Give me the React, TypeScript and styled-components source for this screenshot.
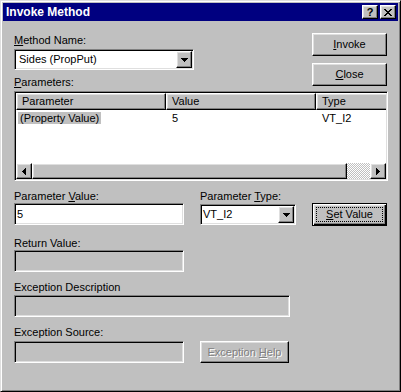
import React from "react";
import styled, { createGlobalStyle, css } from "styled-components";

const GlobalStyle = createGlobalStyle`
  *, *::before, *::after { box-sizing: border-box; }
  html, body { margin: 0; padding: 0; background: #c0c0c0; }
  body {
    font-family: "Liberation Sans", Arial, sans-serif;
    font-size: 11px;
    color: #000;
  }
`;

const raised = css`
  background: #c0c0c0;
  border: 1px solid;
  border-color: #fff #000 #000 #fff;
  box-shadow: inset -1px -1px #808080, inset 1px 1px #dfdfdf;
`;

const sunken = css`
  border: 1px solid;
  border-color: #808080 #fff #fff #808080;
  box-shadow: inset 1px 1px #000, inset -1px -1px #dfdfdf;
`;

const Window = styled.div`
  width: 401px;
  height: 392px;
  display: flex;
  flex-direction: column;
  background: #c0c0c0;
  border: 1px solid;
  border-color: #dfdfdf #000 #000 #dfdfdf;
  box-shadow: inset 1px 1px #fff, inset -1px -1px #808080;
  padding: 2px;
`;

const TitleBar = styled.div`
  height: 18px;
  flex-shrink: 0;
  display: flex;
  align-items: center;
  background: #000080;
  color: #fff;
  padding: 0 2px 0 3px;
`;

const Title = styled.span`
  font-weight: bold;
  font-size: 12px;
  line-height: 18px;
`;

const TitleButtons = styled.div`
  margin-left: auto;
  display: flex;
  gap: 2px;
`;

const TitleButton = styled.div`
  ${raised};
  width: 16px;
  height: 14px;
  display: flex;
  align-items: center;
  justify-content: center;
  color: #000;
  font-weight: bold;
  font-size: 11px;
  line-height: 12px;
`;

const Client = styled.div`
  flex: 1;
  display: flex;
  flex-direction: column;
  padding: 12px 10px 0 11px;
`;

const TopRow = styled.div`
  display: flex;
  justify-content: space-between;
  align-items: flex-start;
`;

const LeftColumn = styled.div`
  width: 180px;
  display: flex;
  flex-direction: column;
`;

const ButtonColumn = styled.div`
  display: flex;
  flex-direction: column;
  gap: 7px;
  margin-right: 1px;
`;

const Caption = styled.div<{ $mt?: number; $area?: string }>`
  line-height: 13px;
  white-space: nowrap;
  margin-top: ${(p) => p.$mt ?? 0}px;
  grid-area: ${(p) => p.$area ?? "auto"};
`;

const Key = styled.span`
  text-decoration: underline;
  text-underline-offset: 1px;
`;

const Combo = styled.div<{ $w?: number; $pl: number; $mt?: number; $area?: string }>`
  ${sunken};
  background: #fff;
  width: ${(p) => (p.$w ? `${p.$w}px` : "100%")};
  height: 21px;
  padding: 1px;
  display: flex;
  align-items: center;
  margin-top: ${(p) => p.$mt ?? 0}px;
  grid-area: ${(p) => p.$area ?? "auto"};
`;

const ComboText = styled.span<{ $pl: number }>`
  flex: 1;
  padding-left: ${(p) => p.$pl}px;
  line-height: 17px;
  white-space: nowrap;
`;

const ArrowButton = styled.div`
  ${raised};
  width: 16px;
  height: 17px;
  flex-shrink: 0;
  display: flex;
  align-items: center;
  justify-content: center;
`;

const Button = styled.div<{ $w?: number; $h?: number; $mt?: number; $area?: string; $disabled?: boolean }>`
  ${raised};
  width: ${(p) => p.$w ?? 75}px;
  height: ${(p) => p.$h ?? 23}px;
  display: flex;
  align-items: center;
  justify-content: center;
  line-height: 13px;
  white-space: nowrap;
  margin-top: ${(p) => p.$mt ?? 0}px;
  grid-area: ${(p) => p.$area ?? "auto"};
  color: ${(p) => (p.$disabled ? "#808080" : "#000")};
  text-shadow: ${(p) => (p.$disabled ? "1px 1px #fff" : "none")};
`;

const DefaultButton = styled(Button)`
  border: 1px solid #000;
  box-shadow: inset 1px 1px #fff, inset -1px -1px #000, inset -2px -2px #808080,
    inset 2px 2px #dfdfdf;
  padding: 3px;
`;

const FocusRing = styled.span`
  flex: 1;
  align-self: stretch;
  border: 1px dotted #000;
  display: flex;
  align-items: center;
  justify-content: center;
`;

const ListView = styled.div`
  ${sunken};
  background: #fff;
  padding: 1px;
  height: 90px;
  margin-top: 2px;
  display: flex;
  flex-direction: column;
  overflow: hidden;
`;

const Header = styled.div`
  display: flex;
  height: 17px;
  flex-shrink: 0;
  overflow: hidden;
`;

const HeaderCell = styled.div<{ $w: number }>`
  ${raised};
  width: ${(p) => p.$w}px;
  flex-shrink: 0;
  padding-left: 5px;
  line-height: 15px;
  white-space: nowrap;
`;

const ListBody = styled.div`
  flex: 1;
  padding-top: 2px;
`;

const ListRow = styled.div`
  display: flex;
  height: 13px;
  line-height: 13px;
`;

const ListCell = styled.div<{ $w: number; $pl: number }>`
  width: ${(p) => p.$w}px;
  flex-shrink: 0;
  padding-left: ${(p) => p.$pl}px;
  white-space: nowrap;
`;

const SelectedLabel = styled.span`
  background: #c0c0c0;
  padding: 0 2px;
  margin-left: 2px;
`;

const ScrollBar = styled.div`
  display: flex;
  height: 16px;
  flex-shrink: 0;
`;

const ScrollButton = styled.div`
  ${raised};
  width: 16px;
  display: flex;
  align-items: center;
  justify-content: center;
`;

const Track = styled.div`
  flex: 1;
  display: flex;
  background-color: #c0c0c0;
  background-image: conic-gradient(#fff 25%, #c0c0c0 0 50%, #fff 0 75%, #c0c0c0 0);
  background-size: 2px 2px;
`;

const Thumb = styled.div`
  ${raised};
  height: 100%;
`;

const FormGrid = styled.div<{ $mt: number }>`
  display: grid;
  grid-template-columns: 170px 16px 96px 16px 75px;
  grid-template-rows: 13px auto;
  align-items: start;
  justify-items: start;
  margin-top: ${(p) => p.$mt}px;
`;

const TextBox = styled.div<{ $w?: number; $mt?: number; $area?: string; $disabled?: boolean }>`
  ${sunken};
  background: ${(p) => (p.$disabled ? "#c0c0c0" : "#fff")};
  width: ${(p) => (p.$w ? `${p.$w}px` : "100%")};
  height: 22px;
  padding: 1px 1px 1px 2px;
  line-height: 18px;
  margin-top: ${(p) => p.$mt ?? 0}px;
  grid-area: ${(p) => p.$area ?? "auto"};
`;

const PixelGlyph = ({ w, h, rects }: { w: number; h: number; rects: [number, number, number, number][] }) => (
  <svg width={w} height={h} viewBox={`0 0 ${w} ${h}`} shapeRendering="crispEdges" style={{ display: "block" }}>
    {rects.map(([x, y, rw, rh], i) => (
      <rect key={i} x={x} y={y} width={rw} height={rh} fill="#000" />
    ))}
  </svg>
);

const DownArrow = () => (
  <PixelGlyph w={7} h={4} rects={[[0, 0, 7, 1], [1, 1, 5, 1], [2, 2, 3, 1], [3, 3, 1, 1]]} />
);
const LeftArrow = () => (
  <PixelGlyph w={4} h={7} rects={[[0, 3, 1, 1], [1, 2, 1, 3], [2, 1, 1, 5], [3, 0, 1, 7]]} />
);
const RightArrow = () => (
  <PixelGlyph w={4} h={7} rects={[[3, 3, 1, 1], [2, 2, 1, 3], [1, 1, 1, 5], [0, 0, 1, 7]]} />
);
const CloseGlyph = () => (
  <PixelGlyph
    w={8}
    h={7}
    rects={[
      [0, 0, 2, 1], [6, 0, 2, 1],
      [1, 1, 2, 1], [5, 1, 2, 1],
      [2, 2, 4, 1],
      [3, 3, 2, 1],
      [2, 4, 4, 1],
      [1, 5, 2, 1], [5, 5, 2, 1],
      [0, 6, 2, 1], [6, 6, 2, 1],
    ]}
  />
);

const columns = [
  { title: "Parameter", width: 150 },
  { title: "Value", width: 150 },
  { title: "Type", width: 150 },
];

export default function App() {
  const thumbRatio = 315 / 338;
  return (
    <>
      <GlobalStyle />
      <Window>
        <TitleBar>
          <Title>Invoke Method</Title>
          <TitleButtons>
            <TitleButton>?</TitleButton>
            <TitleButton>
              <CloseGlyph />
            </TitleButton>
          </TitleButtons>
        </TitleBar>
        <Client>
          <TopRow>
            <LeftColumn>
              <Caption $mt={1}>
                <Key>M</Key>ethod Name:
              </Caption>
              <Combo $pl={3} $mt={2}>
                <ComboText $pl={3}>Sides (PropPut)</ComboText>
                <ArrowButton>
                  <DownArrow />
                </ArrowButton>
              </Combo>
              <Caption $mt={6}>
                <Key>P</Key>arameters:
              </Caption>
            </LeftColumn>
            <ButtonColumn>
              <Button>
                <span>
                  <Key>I</Key>nvoke
                </span>
              </Button>
              <Button>
                <span>
                  <Key>C</Key>lose
                </span>
              </Button>
            </ButtonColumn>
          </TopRow>

          <ListView>
            <Header>
              {columns.map((c) => (
                <HeaderCell key={c.title} $w={c.width}>
                  {c.title}
                </HeaderCell>
              ))}
            </Header>
            <ListBody>
              <ListRow>
                <ListCell $w={150} $pl={0}>
                  <SelectedLabel>(Property Value)</SelectedLabel>
                </ListCell>
                <ListCell $w={150} $pl={6}>
                  5
                </ListCell>
                <ListCell $w={150} $pl={6}>
                  VT_I2
                </ListCell>
              </ListRow>
            </ListBody>
            <ScrollBar>
              <ScrollButton>
                <LeftArrow />
              </ScrollButton>
              <Track>
                <Thumb style={{ width: `${thumbRatio * 100}%` }} />
              </Track>
              <ScrollButton>
                <RightArrow />
              </ScrollButton>
            </ScrollBar>
          </ListView>

          <FormGrid $mt={9}>
            <Caption $area="1 / 1">
              Parameter <Key>V</Key>alue:
            </Caption>
            <Caption $area="1 / 3">
              Parameter <Key>T</Key>ype:
            </Caption>
            <TextBox $area="2 / 1">5</TextBox>
            <Combo $area="2 / 3" $pl={1} $mt={1}>
              <ComboText $pl={1}>VT_I2</ComboText>
              <ArrowButton>
                <DownArrow />
              </ArrowButton>
            </Combo>
            <DefaultButton $area="2 / 5">
              <FocusRing>
                <span>
                  <Key>S</Key>et Value
                </span>
              </FocusRing>
            </DefaultButton>
          </FormGrid>

          <FormGrid $mt={11}>
            <Caption $area="1 / 1">Return Value:</Caption>
            <TextBox $area="2 / 1" $disabled />
          </FormGrid>

          <FormGrid $mt={9}>
            <Caption $area="1 / 1 / 2 / 4">Exception Description</Caption>
            <TextBox $area="2 / 1 / 3 / 4" $w={276} $mt={1} $disabled />
          </FormGrid>

          <FormGrid $mt={9}>
            <Caption $area="1 / 1">Exception Source:</Caption>
            <TextBox $area="2 / 1" $mt={2} $disabled />
            <Button $area="2 / 3" $w={89} $h={22} $mt={2} $disabled>
              <span>
                Exception <Key>H</Key>elp
              </span>
            </Button>
          </FormGrid>
        </Client>
      </Window>
    </>
  );
}
